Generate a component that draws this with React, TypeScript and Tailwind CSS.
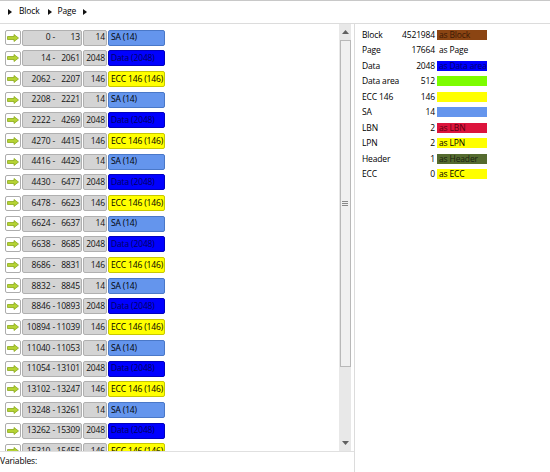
import React from "react";

type Seg = { start: number; size: number; kind: "SA" | "Data" | "ECC" };

const kinds: { kind: Seg["kind"]; size: number }[] = [
  { kind: "SA", size: 14 },
  { kind: "Data", size: 2048 },
  { kind: "ECC", size: 146 },
];

function buildRows(count: number): Seg[] {
  const rows: Seg[] = [];
  let pos = 0;
  for (let i = 0; i < count; i++) {
    const k = kinds[i % 3];
    rows.push({ start: pos, size: k.size, kind: k.kind });
    pos += k.size;
  }
  return rows;
}

const segStyle: Record<Seg["kind"], { cls: string; label: (n: number) => string }> = {
  SA: { cls: "bg-[#6495ed] border-[#4a78c8]", label: (n) => `SA (${n})` },
  Data: { cls: "bg-[#0000ff] border-[#0000c0] text-[#000060]", label: (n) => `Data (${n})` },
  ECC: { cls: "bg-[#ffff00] border-[#c8c800]", label: (n) => `ECC 146 (${n})` },
};

const vars = [
  { name: "Block", value: "4521984", swatch: "bg-[#8b4513]", text: "as Block", textCls: "text-[#3b1a05]" },
  { name: "Page", value: "17664", swatch: "", text: "as Page", textCls: "text-black" },
  { name: "Data", value: "2048", swatch: "bg-[#0000ff]", text: "as Data area", textCls: "text-[#000070]" },
  { name: "Data area", value: "512", swatch: "bg-[#7cfc00]", text: "", textCls: "" },
  { name: "ECC 146", value: "146", swatch: "bg-[#ffff00]", text: "", textCls: "" },
  { name: "SA", value: "14", swatch: "bg-[#6495ed]", text: "", textCls: "" },
  { name: "LBN", value: "2", swatch: "bg-[#dc143c]", text: "as LBN", textCls: "text-[#5a0010]" },
  { name: "LPN", value: "2", swatch: "bg-[#ffff00]", text: "as LPN", textCls: "text-black" },
  { name: "Header", value: "1", swatch: "bg-[#556b2f]", text: "as Header", textCls: "text-[#1a2210]" },
  { name: "ECC", value: "0", swatch: "bg-[#ffff00]", text: "as ECC", textCls: "text-black" },
];

function Tri() {
  return (
    <svg width="4" height="6" viewBox="0 0 4 6" className="shrink-0">
      <path d="M0 0 L4 3 L0 6 Z" fill="#111" />
    </svg>
  );
}

function ArrowBtn() {
  return (
    <div className="w-[16px] h-[15px] border border-[#adadad] bg-white rounded-[2px] flex items-center justify-center shrink-0">
      <svg width="12" height="8" viewBox="0 0 12 8">
        <path d="M0.5 2.5 H7 V0.5 L11.5 4 L7 7.5 V5.5 H0.5 Z" fill="#b5d334" stroke="#8aa81c" strokeWidth="0.8" />
      </svg>
    </div>
  );
}

function Row({ seg }: { seg: Seg }) {
  const s = segStyle[seg.kind];
  const end = seg.start + seg.size - 1;
  return (
    <div className="flex items-center h-[15px] mb-[5.7px] shrink-0 whitespace-nowrap">
      <div className="ml-[5px]">
        <ArrowBtn />
      </div>
      <div className="ml-[1px] w-[60px] h-[16px] bg-[#d4d4d4] border border-[#b0b0b0] rounded-[2px] flex items-center text-[#111]">
        <span className="w-[32px] text-right">{seg.start} -</span>
        <span className="flex-1 text-right pr-[1px]">{end}</span>
      </div>
      <div className="ml-[1px] w-[24px] h-[16px] bg-[#d4d4d4] border border-[#b0b0b0] rounded-[2px] flex items-center justify-end pr-[1px] text-[#111]">
        {seg.size}
      </div>
      <div className={`ml-[1px] w-[57px] h-[16px] border rounded-[2px] flex items-center pl-[2px] overflow-hidden ${s.cls}`}>
        {s.label(seg.size)}
      </div>
    </div>
  );
}

export default function App() {
  const rows = buildRows(21);
  return (
    <div
      className="w-[550px] h-[472px] bg-white flex flex-col overflow-hidden text-[8.5px] leading-none tracking-[-0.15px] text-black"
      style={{ fontFamily: '"Open Sans", "Noto Sans", sans-serif' }}
    >
      <div className="h-[24px] shrink-0 border-t border-[#c8c8c8] border-b border-b-[#dcdcdc] flex items-center pl-[8px] pb-[1px]">
        <Tri />
        <span className="ml-[7px] mr-[8px]">Block</span>
        <Tri />
        <span className="ml-[6px] mr-[7px]">Page</span>
        <Tri />
      </div>
      <div className="flex flex-1 min-h-0">
        <div className="w-[355px] flex flex-col border-r border-[#dcdcdc]">
          <div className="h-[428px] flex border-b border-[#e0e0e0]">
            <div className="flex-1 overflow-hidden flex flex-col pt-[6px]">
              {rows.map((r, i) => (
                <Row key={i} seg={r} />
              ))}
            </div>
            <div className="w-[12px] mr-[3px] bg-[#e8e8e8] flex flex-col items-center">
              <div className="h-[16px] flex items-center justify-center">
                <svg width="7" height="4" viewBox="0 0 7 4">
                  <path d="M0 4 L3.5 0 L7 4 Z" fill="#606060" />
                </svg>
              </div>
              <div className="w-[11px] h-[327px] bg-[#f0f0f0] border border-[#b8b8b8] flex items-center justify-center">
                <div className="flex flex-col gap-[1px]">
                  <div className="w-[6px] h-[1px] bg-[#888]" />
                  <div className="w-[6px] h-[1px] bg-[#888]" />
                  <div className="w-[6px] h-[1px] bg-[#888]" />
                </div>
              </div>
              <div className="flex-1" />
              <div className="h-[16px] flex items-center justify-center">
                <svg width="7" height="4" viewBox="0 0 7 4">
                  <path d="M0 0 L3.5 4 L7 0 Z" fill="#606060" />
                </svg>
              </div>
            </div>
          </div>
          <div className="pt-[5px]">Variables:</div>
        </div>
        <div className="flex-1 pl-[7px] pt-[3px] flex flex-col">
          {vars.map((v) => (
            <div key={v.name} className="flex items-center h-[15.5px] whitespace-nowrap">
              <div className="w-[73px] flex justify-between">
                <span>{v.name}</span>
                <span className="text-right">{v.value}</span>
              </div>
              <div className={`ml-[2px] w-[50px] h-[10px] flex items-center pl-[2px] overflow-hidden ${v.swatch}`}>
                <span className={v.textCls}>{v.text}</span>
              </div>
            </div>
          ))}
        </div>
      </div>
    </div>
  );
}
